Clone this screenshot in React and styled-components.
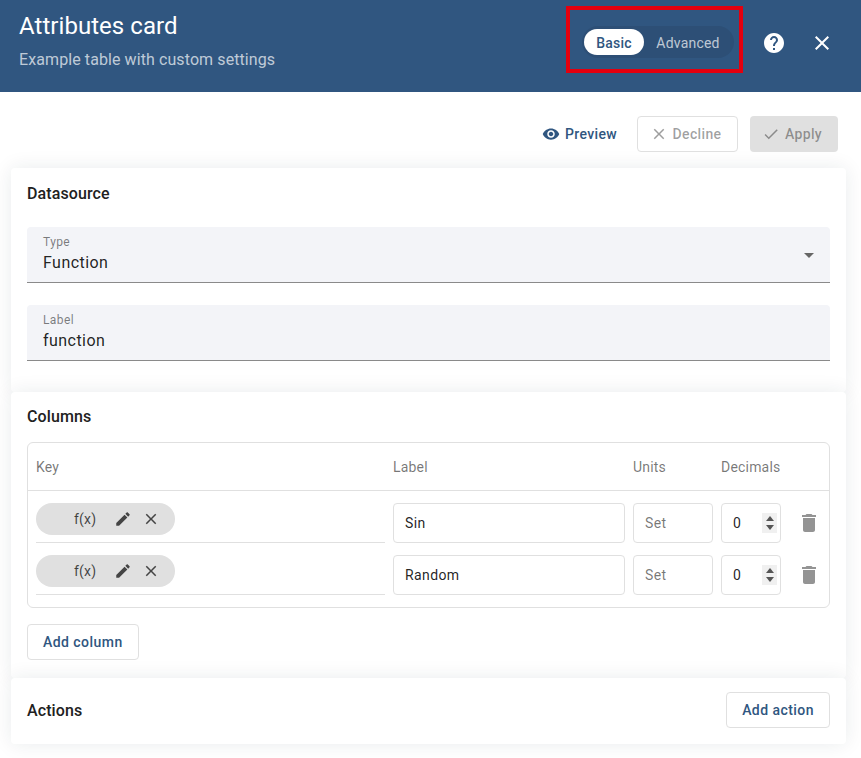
import React from 'react';
import styled, { createGlobalStyle } from 'styled-components';

const paths = {
    help: 'M12 2C6.48 2 2 6.48 2 12s4.48 10 10 10 10-4.48 10-10S17.52 2 12 2zm1 17h-2v-2h2v2zm2.07-7.75l-.9.92C13.45 12.9 13 13.5 13 15h-2v-.5c0-1.1.45-2.1 1.17-2.83l1.24-1.26c.37-.36.59-.86.59-1.41 0-1.1-.9-2-2-2s-2 .9-2 2H8c0-2.21 1.79-4 4-4s4 1.79 4 4c0 .88-.36 1.68-.93 2.25z',
    close: 'M19 6.41L17.59 5 12 10.59 6.41 5 5 6.41 10.59 12 5 17.59 6.41 19 12 13.41 17.59 19 19 17.59 13.41 12z',
    eye: 'M12 4.5C7 4.5 2.73 7.61 1 12c1.73 4.39 6 7.5 11 7.5s9.27-3.11 11-7.5c-1.73-4.39-6-7.5-11-7.5zM12 17c-2.76 0-5-2.24-5-5s2.24-5 5-5 5 2.24 5 5-2.24 5-5 5zm0-8c-1.66 0-3 1.34-3 3s1.34 3 3 3 3-1.34 3-3-1.34-3-3-3z',
    check: 'M9 16.17L4.83 12l-1.42 1.41L9 19 21 7l-1.41-1.41z',
    edit: 'M3 17.25V21h3.75L17.81 9.94l-3.75-3.75L3 17.25zM20.71 7.04c.39-.39.39-1.02 0-1.41l-2.34-2.34c-.39-.39-1.02-.39-1.41 0l-1.83 1.83 3.75 3.75 1.83-1.83z',
    trash: 'M6 19c0 1.1.9 2 2 2h8c1.1 0 2-.9 2-2V7H6v12zM19 4h-3.5l-1-1h-5l-1 1H5v2h14V4z',
    arrow: 'M7 10l5 5 5-5z',
};

function Icon({ name, size = 24, color = 'currentColor' }) {
    return (
        <IconSvg width={size} height={size} viewBox="0 0 24 24" fill={color}>
            <path d={paths[name]} />
        </IconSvg>
    );
}

const rows = ['Sin', 'Random'];

function App() {
    return (
        <Page>
            <GlobalStyle />
            <Header>
                <Titles>
                    <Title>Attributes card</Title>
                    <Subtitle>Example table with custom settings</Subtitle>
                </Titles>
                <ModeToggle>
                    <ModeButton active>Basic</ModeButton>
                    <ModeButton>Advanced</ModeButton>
                    <Highlight />
                </ModeToggle>
                <HeaderIcons>
                    <Icon name="help" color="#fff" />
                    <Icon name="close" color="#fff" />
                </HeaderIcons>
            </Header>
            <Toolbar>
                <PreviewButton><Icon name="eye" size={18} />Preview</PreviewButton>
                <DeclineButton><Icon name="close" size={18} />Decline</DeclineButton>
                <ApplyButton><Icon name="check" size={18} />Apply</ApplyButton>
            </Toolbar>
            <Content>
                <DatasourceCard>
                    <CardTitle>Datasource</CardTitle>
                    <FilledField>
                        <FieldLabel>Type</FieldLabel>
                        <FieldValue>Function</FieldValue>
                        <SelectArrow><Icon name="arrow" color="#666" /></SelectArrow>
                    </FilledField>
                    <FilledField>
                        <FieldLabel>Label</FieldLabel>
                        <FieldValue>function</FieldValue>
                    </FilledField>
                </DatasourceCard>
                <ColumnsCard>
                    <CardTitle>Columns</CardTitle>
                    <Table>
                        <HeadRow>
                            <HeadCell>Key</HeadCell>
                            <HeadCell>Label</HeadCell>
                            <HeadCell>Units</HeadCell>
                            <HeadCell>Decimals</HeadCell>
                        </HeadRow>
                        <TableBody>
                            {rows.map((label) => (
                                <Row key={label}>
                                    <KeyCell>
                                        <Chip>
                                            <ChipText>f(x)</ChipText>
                                            <Icon name="edit" size={18} color="#444" />
                                            <Icon name="close" size={18} color="#444" />
                                        </Chip>
                                    </KeyCell>
                                    <TextInput defaultValue={label} />
                                    <TextInput placeholder="Set" />
                                    <NumberField>
                                        <NumberInput type="number" defaultValue={0} />
                                        <Stepper>
                                            <svg width="8" height="5" viewBox="0 0 8 5" fill="#555"><path d="M4 0l4 5H0z" /></svg>
                                            <svg width="8" height="5" viewBox="0 0 8 5" fill="#555"><path d="M0 0h8L4 5z" /></svg>
                                        </Stepper>
                                    </NumberField>
                                    <TrashButton><Icon name="trash" color="#949494" /></TrashButton>
                                </Row>
                            ))}
                        </TableBody>
                    </Table>
                    <OutlineButton>Add column</OutlineButton>
                </ColumnsCard>
                <ActionsCard>
                    <ActionsTitle>Actions</ActionsTitle>
                    <OutlineButton>Add action</OutlineButton>
                </ActionsCard>
            </Content>
        </Page>
    );
}

export default App;

const GlobalStyle = createGlobalStyle`
    html, body {
        margin: 0;
        background: #fff;
    }
    * {
        box-sizing: border-box;
    }
`;

const IconSvg = styled.svg`
    display: block;
    flex: none;
`;

const Page = styled.div`
    width: 861px;
    height: 758px;
    overflow: hidden;
    font-family: Roboto, "Liberation Sans", sans-serif;
    background: #fff;
`;

const Header = styled.header`
    height: 92px;
    background: #305680;
    display: flex;
    align-items: flex-start;
    padding: 11px 27px 0 19px;
    color: #fff;
`;

const Titles = styled.div`
    flex: 1;
`;

const Title = styled.div`
    font-size: 24px;
    line-height: 30px;
    letter-spacing: 0.05px;
`;

const Subtitle = styled.div`
    margin-top: 5px;
    font-size: 16px;
    line-height: 28px;
    letter-spacing: 0.09px;
    color: rgba(255, 255, 255, 0.7);
`;

const ModeToggle = styled.div`
    position: relative;
    display: flex;
    align-items: center;
    height: 32px;
    margin-top: 15px;
    padding: 3px 2px;
    border-radius: 16px;
    background: #2d4f76;
`;

const Highlight = styled.div`
    position: absolute;
    left: -16px;
    right: -9px;
    top: -20px;
    bottom: -15px;
    border: 4px solid #e4000f;
`;

const ModeButton = styled.div`
    height: 26px;
    width: ${(props) => (props.active ? '60px' : '88px')};
    text-align: center;
    border-radius: 13px;
    font-size: 14px;
    font-weight: ${(props) => (props.active ? 500 : 400)};
    line-height: 28px;
    letter-spacing: 0.2px;
    color: ${(props) => (props.active ? '#305680' : 'rgba(255, 255, 255, 0.7)')};
    background: ${(props) => (props.active ? '#fff' : 'transparent')};
`;

const HeaderIcons = styled.div`
    display: flex;
    gap: 24px;
    margin: 20px 0 0 28px;
`;

const Toolbar = styled.div`
    height: 76px;
    display: flex;
    align-items: flex-start;
    justify-content: flex-end;
    gap: 12px;
    padding: 24px 23px 0 0;
`;

const BaseButton = styled.div`
    height: 36px;
    display: flex;
    align-items: center;
    justify-content: center;
    font-size: 14px;
    font-weight: 500;
    letter-spacing: 0.35px;
    border-radius: 4px;
`;

const PreviewButton = styled(BaseButton)`
    gap: 5px;
    padding: 0 8px;
    color: #305680;
`;

const DeclineButton = styled(BaseButton)`
    gap: 5px;
    width: 101px;
    padding-right: 4px;
    color: rgba(0, 0, 0, 0.38);
    border: 1px solid #e0e0e0;
`;

const ApplyButton = styled(BaseButton)`
    gap: 5px;
    width: 88px;
    padding-right: 4px;
    color: rgba(0, 0, 0, 0.38);
    background: #e0e0e0;
`;

const Content = styled.div`
    padding: 0 15px 0 11px;
`;

const Card = styled.section`
    background: #fff;
    border-radius: 4px;
    box-shadow: 0 0 20px rgba(20, 40, 60, 0.09);
    padding: 0 16px;
`;

const DatasourceCard = styled(Card)`
    height: 224px;
    padding-top: 16px;
`;

const ColumnsCard = styled(Card)`
    height: 286px;
    padding-top: 15px;
`;

const ActionsCard = styled(Card)`
    height: 66px;
    padding-bottom: 2px;
    display: flex;
    align-items: center;
    justify-content: space-between;
`;

const CardTitle = styled.h3`
    margin: 0;
    font-size: 16px;
    font-weight: 500;
    line-height: 20px;
    letter-spacing: 0.1px;
    color: #212121;
`;

const ActionsTitle = styled(CardTitle)`
    padding-top: 2px;
`;

const FilledField = styled.div`
    position: relative;
    height: 56px;
    margin-top: 22px;
    padding: 8px 16px 0;
    background: #f3f4f8;
    border-radius: 4px 4px 0 0;
    border-bottom: 1px solid #8a8a8a;

    &:first-of-type {
        margin-top: 23px;
    }
`;

const FieldLabel = styled.div`
    font-size: 12px;
    line-height: 14px;
    letter-spacing: 0.4px;
    color: rgba(0, 0, 0, 0.5);
`;

const FieldValue = styled.div`
    margin-top: 4px;
    font-size: 16px;
    line-height: 20px;
    letter-spacing: 0.45px;
    color: rgba(0, 0, 0, 0.87);
`;

const SelectArrow = styled.div`
    position: absolute;
    right: 9px;
    top: 16px;
`;

const Table = styled.div`
    margin-top: 15px;
    height: 166px;
    border: 1px solid #e0e0e0;
    border-radius: 6px;
`;

const columnsGrid = `
    display: grid;
    grid-template-columns: 349px 232px 80px 60px 48px;
    column-gap: 8px;
`;

const HeadRow = styled.div`
    ${columnsGrid}
    height: 48px;
    padding-left: 8px;
    align-items: center;
    border-bottom: 1px solid #e0e0e0;
`;

const HeadCell = styled.div`
    font-size: 14px;
    letter-spacing: 0.2px;
    color: rgba(0, 0, 0, 0.54);
`;

const TableBody = styled.div`
    display: flex;
    flex-direction: column;
    gap: 12px;
    padding: 12px 0 0 8px;
`;

const Row = styled.div`
    ${columnsGrid}
    height: 40px;
    align-items: start;
`;

const KeyCell = styled.div`
    height: 40px;
    border-bottom: 1px solid #e0e0e0;
`;

const Chip = styled.div`
    width: 139px;
    height: 32px;
    padding: 0 15px 0 38px;
    display: flex;
    align-items: center;
    border-radius: 16px;
    background: #e0e0e0;
`;

const ChipText = styled.span`
    width: 40px;
    font-size: 14px;
    letter-spacing: 0.2px;
    color: rgba(0, 0, 0, 0.72);

    & ~ svg + svg {
        margin-left: 10px;
    }
`;

const TextInput = styled.input`
    width: 100%;
    height: 40px;
    padding: 0 11px;
    font-family: inherit;
    font-size: 14px;
    letter-spacing: 0.4px;
    color: rgba(0, 0, 0, 0.87);
    border: 1px solid #e0e0e0;
    border-radius: 4px;
    outline: none;

    &::placeholder {
        color: rgba(0, 0, 0, 0.54);
    }
`;

const NumberField = styled.div`
    position: relative;
    height: 40px;
`;

const NumberInput = styled(TextInput)`
    appearance: textfield;

    &::-webkit-inner-spin-button {
        appearance: none;
    }
`;

const Stepper = styled.div`
    position: absolute;
    top: 10px;
    right: 4px;
    width: 15px;
    height: 20px;
    display: flex;
    flex-direction: column;
    align-items: center;
    justify-content: center;
    gap: 4px;
    background: #f0f0f0;
`;

const TrashButton = styled.div`
    height: 40px;
    display: flex;
    align-items: center;
    padding-left: 8px;
`;

const OutlineButton = styled(BaseButton)`
    display: inline-flex;
    padding: 0 15px;
    margin-top: 16px;
    letter-spacing: 0.45px;
    color: #305680;
    background: #fff;
    border: 1px solid #e0e0e0;

    ${ActionsCard} & {
        margin-top: 0;
    }
`;
